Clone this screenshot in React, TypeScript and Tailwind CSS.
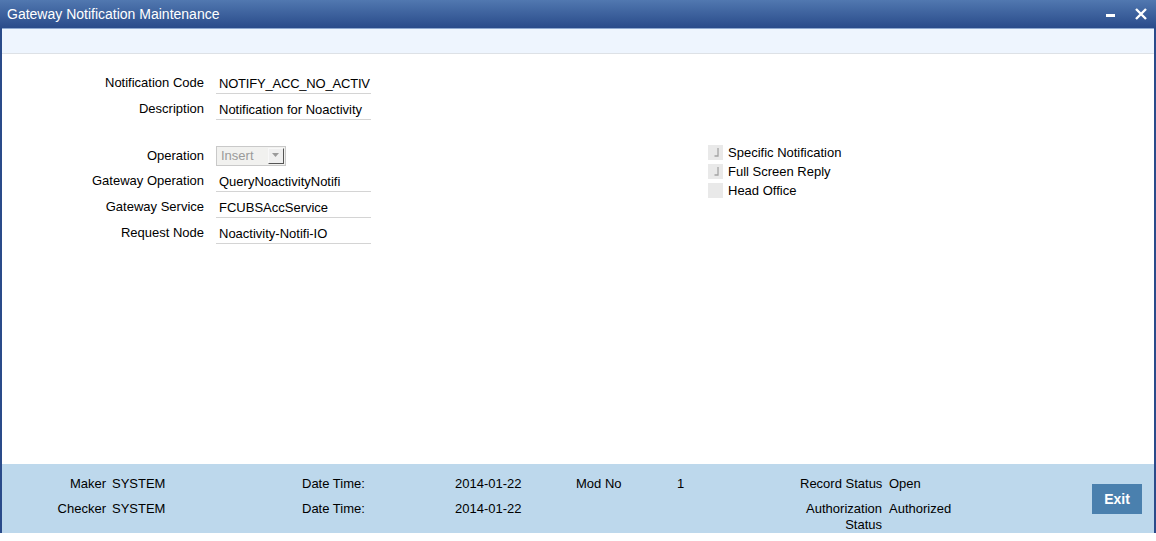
import { ReactNode } from "react";

const font = { fontFamily: '"Liberation Sans", Arial, sans-serif' };

const Field = ({ label, value, tight }: { label: string; value: string; tight?: boolean }) => (
	<div className="flex h-[26px] items-center">
		<div className="w-[203px] text-right pr-px">{label}</div>
		<div
			className={`ml-[11px] h-[22px] w-[155px] border-b border-[#d4d4d4] pl-[3px] leading-[23px] whitespace-nowrap overflow-hidden ${tight ? "tracking-[-0.2px]" : ""}`}
		>
			{value}
		</div>
	</div>
);

const Check = ({ label, ticked }: { label: string; ticked?: boolean }) => (
	<div className="flex h-[19px] items-center">
		<div className="flex h-[15px] w-[15px] items-center justify-center bg-[#e9e9e9]">
			{ticked && (
				<svg width="15" height="15" viewBox="0 0 15 15">
					<path d="M10 3 V11 H6.5" fill="none" stroke="#a4a4a4" strokeWidth="1.3" />
				</svg>
			)}
		</div>
		<span className="ml-[5px]">{label}</span>
	</div>
);

const FootCell = ({ w, right, children }: { w: string; right?: boolean; children?: ReactNode }) => (
	<div className={`${w} shrink-0 ${right ? "text-right" : ""}`}>{children}</div>
);

export default function App() {
	return (
		<div className="w-[1156px] h-[541px] bg-white text-[13px] text-black" style={font}>
			<div className="flex h-[533px] flex-col">
				{/* title bar */}
				<div className="flex h-[28px] items-center justify-between bg-gradient-to-b from-[#5178b0] to-[#2a4b8a] pl-[7px] pr-[9px] text-white">
					<span className="text-[14px]">Gateway Notification Maintenance</span>
					<div className="flex items-center gap-[19px]">
						<svg width="10" height="12" viewBox="0 0 10 12">
							<rect x="0" y="6" width="9" height="3" fill="#fff" />
						</svg>
						<svg width="12" height="12" viewBox="0 0 12 12">
							<path d="M1 1 L11 11 M11 1 L1 11" stroke="#fff" strokeWidth="2.4" />
						</svg>
					</div>
				</div>

				<div className="flex flex-1 flex-col border-x-2 border-[#2a4b8a]">
					{/* toolbar strip */}
					<div className="h-[26px] border-t border-[#8ea8cf] border-b border-b-[#dde1e6] bg-[#eef5fe]" />

					{/* body */}
					<div className="flex-1 pt-[16px] bg-white">
						<Field label="Notification Code" value="NOTIFY_ACC_NO_ACTIV" tight />
						<Field label="Description" value="Notification for Noactivity" />

						<div className="mt-[21px] flex">
							<div className="w-[706px] shrink-0">
								<div className="flex h-[25px] items-center">
									<div className="w-[203px] text-right pr-px">Operation</div>
									<div className="ml-[11px] flex h-[20px] w-[70px] items-center justify-between border border-[#c9c9c9] bg-[#f1f1ef] pl-[4px] pr-px text-[#9a9a9a]">
										<span>Insert</span>
										<div className="flex h-[16px] w-[16px] items-center justify-center border border-[#f8f8f8] border-r-[#555] border-b-[#555] bg-[#efefef]">
											<svg width="8" height="5" viewBox="0 0 8 5">
												<path d="M0 0 H7 L3.5 4 Z" fill="#9a9a9a" />
											</svg>
										</div>
									</div>
								</div>
								<Field label="Gateway Operation" value="QueryNoactivityNotifi" />
								<Field label="Gateway Service" value="FCUBSAccService" />
								<Field label="Request Node" value="Noactivity-Notifi-IO" />
							</div>
							<div>
								<Check label="Specific Notification" ticked />
								<Check label="Full Screen Reply" ticked />
								<Check label="Head Office" />
							</div>
						</div>
					</div>

					{/* footer */}
					<div className="flex h-[69px] bg-[#bdd8ec]">
						<div className="flex flex-col gap-[9px] pt-[12px] leading-4">
							<div className="flex">
								<FootCell w="w-[104px]" right>Maker</FootCell>
								<FootCell w="w-[196px] pl-[6px]">SYSTEM</FootCell>
								<FootCell w="w-[153px]">Date Time:</FootCell>
								<FootCell w="w-[121px]">2014-01-22</FootCell>
								<FootCell w="w-[101px]">Mod No</FootCell>
								<FootCell w="w-[123px]">1</FootCell>
								<FootCell w="w-[82px] whitespace-nowrap" right>Record Status</FootCell>
								<FootCell w="w-[200px] pl-[7px]">Open</FootCell>
							</div>
							<div className="flex">
								<FootCell w="w-[104px]" right>Checker</FootCell>
								<FootCell w="w-[196px] pl-[6px]">SYSTEM</FootCell>
								<FootCell w="w-[153px]">Date Time:</FootCell>
								<FootCell w="w-[121px]">2014-01-22</FootCell>
								<FootCell w="w-[101px]" />
								<FootCell w="w-[123px]" />
								<FootCell w="w-[82px]" right>Authorization Status</FootCell>
								<FootCell w="w-[200px] pl-[7px]">Authorized</FootCell>
							</div>
						</div>
						<div className="ml-auto mr-[12px] pt-[20px]">
							<button className="h-[30px] w-[50px] bg-[#4a80ae] text-[14px] font-bold text-white">
								Exit
							</button>
						</div>
					</div>
				</div>
			</div>
		</div>
	);
}
